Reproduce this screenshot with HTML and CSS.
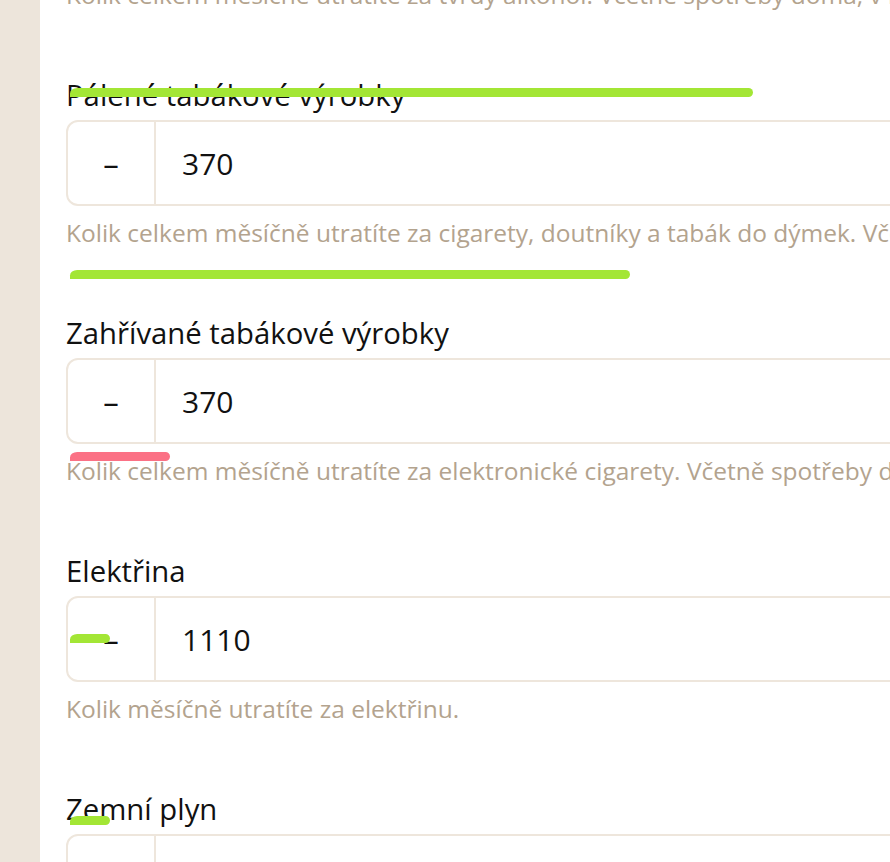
FILE: index.html
```html
<!DOCTYPE html>
<html lang="cs">
<head>
<meta charset="utf-8">
<title>Spotřeba</title>
<link rel="stylesheet" href="styles.css">
</head>
<body>
<div class="page">
  <aside class="sidebar"></aside>
  <main class="main">
    <p class="help help-first">Kolik celkem měsíčně utratíte za tvrdý alkohol. Včetně spotřeby doma, v restauracích a barech.</p>

    <section class="field">
      <label class="label">Pálené tabákové výrobky</label>
      <div class="box"><button class="minus">–</button><span class="value">370</span></div>
      <p class="help">Kolik celkem měsíčně utratíte za cigarety, doutníky a tabák do dýmek. Včetně spotřeby doma i venku.</p>
    </section>

    <section class="field">
      <label class="label">Zahřívané tabákové výrobky</label>
      <div class="box"><button class="minus">–</button><span class="value">370</span></div>
      <p class="help">Kolik celkem měsíčně utratíte za elektronické cigarety. Včetně spotřeby doma i venku.</p>
    </section>

    <section class="field">
      <label class="label">Elektřina</label>
      <div class="box"><button class="minus">–</button><span class="value">1110</span></div>
      <p class="help">Kolik měsíčně utratíte za elektřinu.</p>
    </section>

    <section class="field">
      <label class="label">Zemní plyn</label>
      <div class="box"><button class="minus">–</button><span class="value"></span></div>
      <p class="help">Kolik měsíčně utratíte za zemní plyn.</p>
    </section>

    <span class="bar bar-green bar1"></span>
    <span class="bar bar-green bar2"></span>
    <span class="bar bar-pink bar3"></span>
    <span class="bar bar-green bar4"></span>
    <span class="bar bar-green bar5"></span>
  </main>
</div>
</body>
</html>
```

FILE: styles.css
```css
html, body {
  margin: 0;
  padding: 0;
  background: #ffffff;
  overflow: hidden;
  height: 862px;
}
.page {
  display: flex;
  width: 1400px;
  height: 862px;
  font-family: "Open Sans", "Noto Sans", sans-serif;
}
.sidebar {
  width: 40px;
  flex: 0 0 40px;
  background: #ede5db;
}
.main {
  position: relative;
  flex: 1;
  padding-left: 26px;
  display: flex;
  flex-direction: column;
}
.help {
  margin: 12px 0 0;
  font-size: 24.5px;
  line-height: 30px;
  color: #b3a38e;
  white-space: nowrap;
}
.help-first {
  margin-top: -20px;
}
.field {
  display: flex;
  flex-direction: column;
  margin-top: 67px;
}
.label {
  font-size: 29.3px;
  line-height: 36px;
  color: #111111;
  margin-bottom: 7px;
  white-space: nowrap;
}
.box {
  display: flex;
  align-items: center;
  height: 86px;
  box-sizing: border-box;
  width: 1200px;
  border: 2px solid #eee6dc;
  border-radius: 12px;
}
.minus {
  width: 88px;
  height: 100%;
  border: 0;
  border-right: 2px solid #eee6dc;
  background: transparent;
  font-family: inherit;
  font-size: 31px;
  color: #111111;
  padding: 0;
}
.value {
  padding-left: 26px;
  font-size: 30px;
  color: #111111;
}
.bar {
  position: absolute;
  height: 9px;
  border-radius: 8px 5px 5px 0 / 6px 5px 5px 0;
}
.bar-green { background: #a3e635; }
.bar-pink { background: #fb7185; }
.bar1 { left: 30px; top: 88px; width: 683px; }
.bar2 { left: 30px; top: 270px; width: 560px; }
.bar3 { left: 30px; top: 452px; width: 100px; }
.bar4 { left: 30px; top: 634px; width: 40px; }
.bar5 { left: 30px; top: 816px; width: 40px; }
```
